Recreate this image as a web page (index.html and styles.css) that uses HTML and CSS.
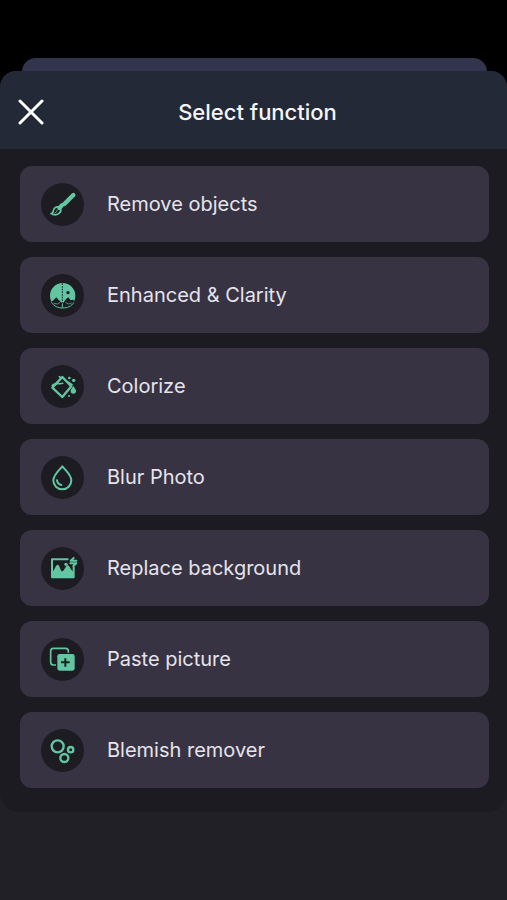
FILE: index.html
```html
<!DOCTYPE html>
<html lang="en">
<head>
<meta charset="utf-8">
<meta name="viewport" content="width=device-width, initial-scale=1">
<title>Select function</title>
<link rel="stylesheet" href="styles.css">
</head>
<body>
<div class="backdrop"></div>
<main class="sheet">
  <header class="header">
    <button class="close" type="button" aria-label="Close">
      <svg viewBox="0 0 26 26" aria-hidden="true"><path d="M2 2L24 24M24 2L2 24"/></svg>
    </button>
    <h1 class="title">Select function</h1>
  </header>
  <div class="panel">
    <button class="option" type="button">
      <svg class="icon" viewBox="33 38 129 129" aria-hidden="true">
        <path class="line" stroke-width="13" d="M103 101L130 74"/>
        <path class="line" stroke-width="13" stroke-linecap="butt" d="M88 113L96 105"/>
        <path class="line" stroke-width="5" d="M86 110C76 108 71 115 70 122C69 127 66 130 63 130C71 135 81 134 87 129C92 125 94 119 91 114"/>
        <path class="line" stroke-width="3" d="M75 128C79 127 80 121 82 119"/>
      </svg>
      <span>Remove objects</span>
    </button>
    <button class="option" type="button">
      <svg class="icon" viewBox="33 39 129 129" aria-hidden="true">
        <circle class="fill" cx="98" cy="104" r="38"/>
        <path class="hole" d="M60 126L70 118L79 109L87 118L98 128L108 114L115 109L122 118L129 116L137 124L127 140L98 145L68 139Z"/>
        <path class="line" stroke-width="3" d="M65 125C72 136 84 141 98 141S125 136 131 125"/>
        <path class="line" stroke-width="2" d="M72 127L82 129L89 125M108 125L116 129L124 126"/>
        <circle class="hole" cx="114" cy="95" r="5"/>
        <path class="dash" d="M97 67V126"/>
        <path class="line" stroke-width="3" d="M97 130V139"/>
      </svg>
      <span>Enhanced &amp; Clarity</span>
    </button>
    <button class="option" type="button">
      <svg class="icon" viewBox="33 40 129 129" aria-hidden="true">
        <path class="line" stroke-width="7" d="M97 76L124 104L97 136L67 108Z"/>
        <path class="line" stroke-width="5" d="M93 79L88 75M67 101C78 91 87 99 98 95M116 92L126 99"/>
        <circle class="fill" cx="118" cy="79" r="4"/>
        <circle class="fill" cx="131" cy="86" r="5"/>
        <circle class="fill" cx="117" cy="133" r="3"/>
        <path class="fill" d="M130 103C126 110 122 113 122 118A8 8 0 0 0 138 118C138 113 134 110 130 103Z"/>
      </svg>
      <span>Colorize</span>
    </button>
    <button class="option" type="button">
      <svg class="icon" viewBox="33 39 129 129" aria-hidden="true">
        <path class="line" stroke-width="6" d="M97 70C86 83 70 96 70 112A27 27 0 0 0 124 112C124 96 108 83 97 70Z"/>
        <path class="line" stroke-width="6" d="M81 112C82 119 87 124 94 126"/>
      </svg>
      <span>Blur Photo</span>
    </button>
    <button class="option" type="button">
      <svg class="icon" viewBox="33 38 129 129" aria-hidden="true">
        <path class="line" stroke-width="6" d="M113 75H66V129H131V99"/>
        <path class="fill" d="M66 113C73 110 77 91 83 91S91 111 97 111S107 93 113 93S121 107 131 113V130H66Z"/>
        <circle class="fill" cx="108" cy="90" r="5"/>
        <path class="line" stroke-width="6" d="M122 79H139M122 79L131 71M139 87H121M139 87L130 95"/>
      </svg>
      <span>Replace background</span>
    </button>
    <button class="option" type="button">
      <svg class="icon" viewBox="33 40 129 129" aria-hidden="true">
        <rect class="line" stroke-width="5" x="62" y="71" width="53" height="50" rx="8"/>
        <rect class="hole" x="78" y="84" width="58" height="56" rx="9"/>
        <rect class="fill" x="82" y="88" width="52" height="50" rx="7"/>
        <path class="plus" d="M106 101V126M93 113H119"/>
      </svg>
      <span>Paste picture</span>
    </button>
    <button class="option" type="button">
      <svg class="icon" viewBox="33 39 129 129" aria-hidden="true">
        <circle class="line" stroke-width="7" cx="83" cy="91" r="18"/>
        <circle class="line" stroke-width="7" cx="122" cy="101" r="8"/>
        <circle class="line" stroke-width="7" cx="103" cy="126" r="12"/>
      </svg>
      <span>Blemish remover</span>
    </button>
  </div>
</main>
</body>
</html>
```
FILE: styles.css
```css
* {
  box-sizing: border-box;
}

body {
  display: flex;
  flex-direction: column;
  min-height: 100vh;
  margin: 0;
  padding-top: 58px;
  background: #000;
  color: #e6e4eb;
  font-family: Inter, Roboto, sans-serif;
}

.backdrop {
  height: 32px;
  margin: 0 20px -19px 22px;
  border-radius: 14px 14px 0 0;
  background: #33354e;
}

.sheet {
  position: relative;
  flex: 1;
  overflow: hidden;
  border-radius: 16px 16px 0 0;
  background: #212027;
}

.header {
  display: grid;
  grid-template-columns: 26px 1fr 18px;
  align-items: center;
  height: 78px;
  padding: 4px 18px 0;
  background: #232936;
}

.close {
  width: 26px;
  height: 26px;
  padding: 0;
  border: 0;
  background: none;
}

.close svg {
  display: block;
  fill: none;
  stroke: #fff;
  stroke-width: 3;
  stroke-linecap: round;
}

.title {
  margin: 0;
  color: #f5f6fa;
  font-size: 22px;
  font-weight: 500;
  line-height: 28px;
  text-align: center;
}

.panel {
  display: flex;
  flex-direction: column;
  gap: 15px;
  padding: 17px 18px 24px 20px;
  border-radius: 0 0 20px 20px;
  background: #1c1b21;
}

.option {
  display: flex;
  align-items: center;
  gap: 23px;
  width: 100%;
  height: 76px;
  padding: 0 21px;
  border: 0;
  border-radius: 12px;
  background: #373343;
  color: inherit;
  font: 400 20px/28px Inter, Roboto, sans-serif;
  text-align: left;
}

.icon {
  flex: none;
  width: 43px;
  height: 43px;
  border-radius: 50%;
  background: #1d1c23;
}

.line,
.dash,
.plus {
  fill: none;
  stroke: #62c6a2;
  stroke-linecap: round;
  stroke-linejoin: round;
}

.fill {
  fill: #62c6a2;
}

.hole {
  fill: #1d1c23;
}

.dash {
  stroke: #1d1c23;
  stroke-width: 3;
  stroke-linecap: butt;
  stroke-dasharray: 5 3;
}

.plus {
  stroke: #1d1c23;
  stroke-width: 6;
  stroke-linecap: butt;
}
```
